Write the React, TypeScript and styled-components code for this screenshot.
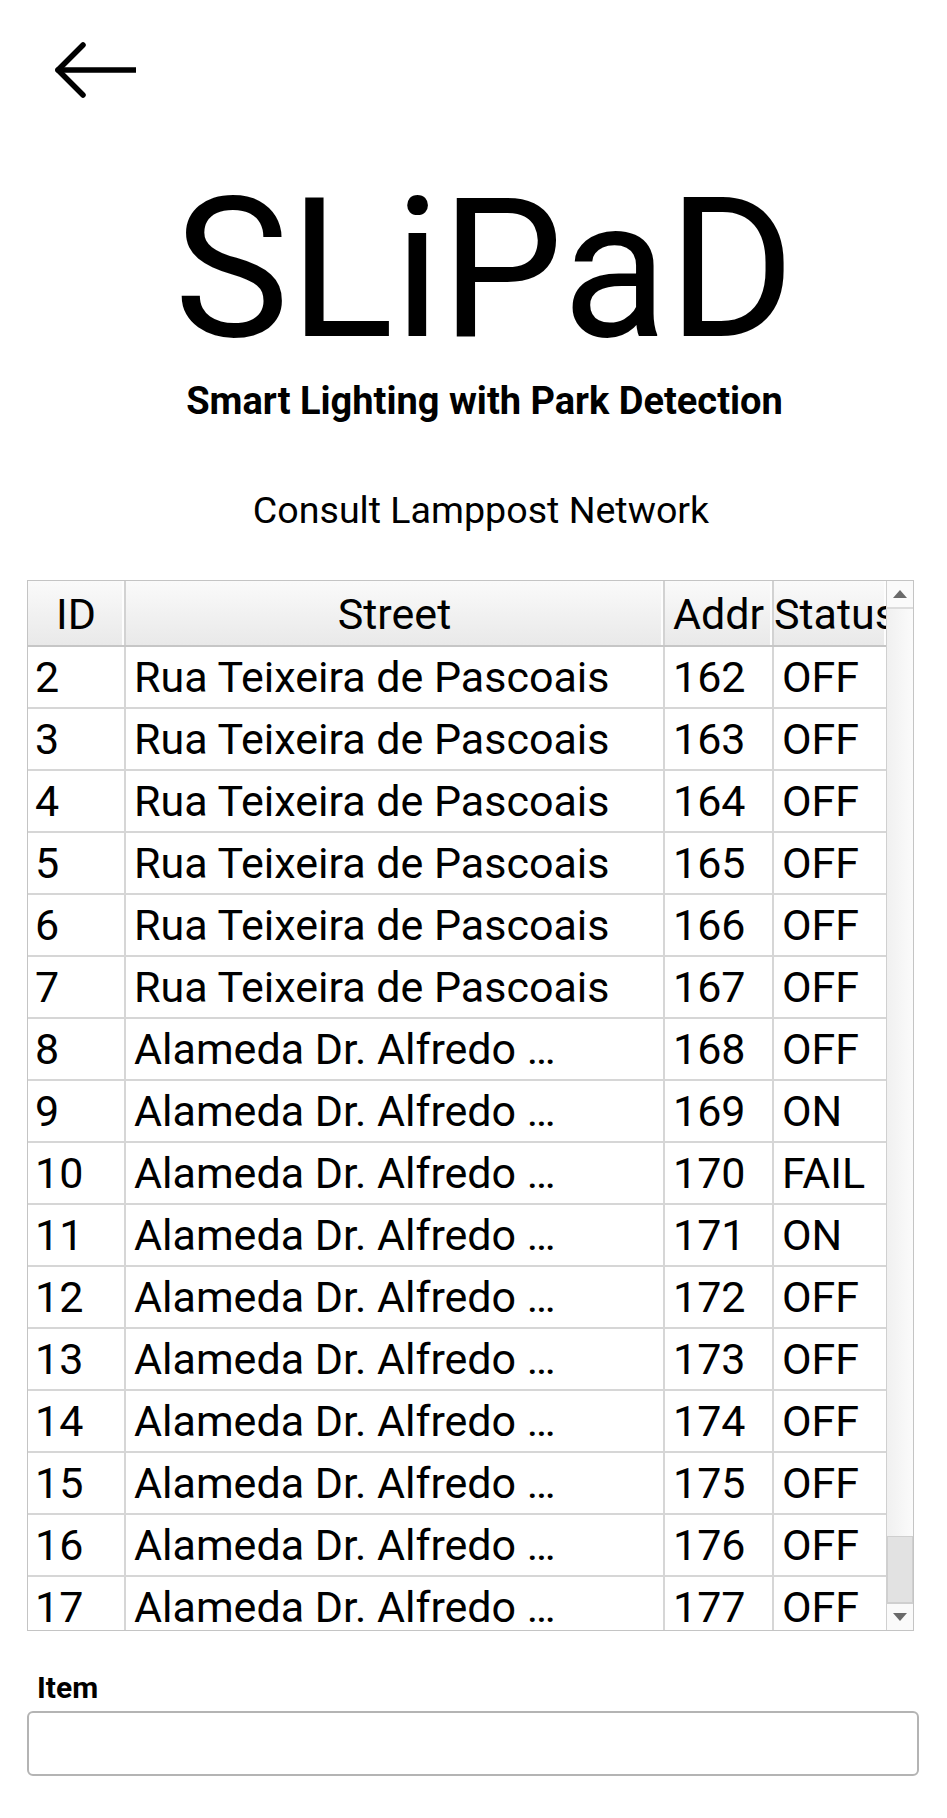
import React from "react";
import styled, { createGlobalStyle } from "styled-components";

const GlobalStyle = createGlobalStyle`
  html, body { margin: 0; padding: 0; background: #ffffff; }
  body { font-family: Roboto, "Noto Sans", "Liberation Sans", sans-serif; color: #000; }
  * { box-sizing: border-box; }
`;

const Page = styled.div`
  width: 947px;
  padding: 40px 0 0 27px;
  display: flex;
  flex-direction: column;
`;

const BackButton = styled.button`
  width: 90px;
  height: 60px;
  margin-left: 22px;
  padding: 0;
  border: none;
  background: transparent;
  display: flex;
  align-items: center;
  justify-content: center;
`;

const Heading = styled.div`
  width: 887px;
  padding-left: 28px;
  display: flex;
  flex-direction: column;
  align-items: center;
`;

const Title = styled.h1`
  margin: 70px 0 0;
  font-size: 194px;
  line-height: 200px;
  font-weight: 400;
`;

const Subtitle = styled.h2`
  margin: 10px 0 0;
  font-size: 38px;
  line-height: 42px;
  font-weight: 700;
`;

const Caption = styled.p`
  margin: 66px 7px 0 0;
  font-size: 37.6px;
  line-height: 44px;
  font-weight: 400;
`;

const TableFrame = styled.div`
  margin-top: 48px;
  width: 887px;
  height: 1051px;
  border: 1px solid #c4c4c4;
  display: flex;
  background: #fff;
`;

const GridArea = styled.div`
  flex: 1;
  display: flex;
  flex-direction: column;
  overflow: hidden;
`;

const columns = "98px 539px 109px 114px";

const HeaderRow = styled.div`
  display: grid;
  grid-template-columns: ${columns};
  height: 66px;
  flex-shrink: 0;
  background: linear-gradient(#fafafa, #e9e9e9);
  border-bottom: 2px solid #c6c6c6;
`;

const HeaderCell = styled.div`
  font-size: 43px;
  line-height: 66px;
  text-align: center;
  white-space: nowrap;
  overflow: hidden;
  border-right: 2px solid #d2d2d2;
  box-shadow: inset -3px 0 0 -1px #fdfdfd;
`;

const Body = styled.div`
  flex: 1;
  overflow: hidden;
`;

const Row = styled.div`
  display: grid;
  grid-template-columns: ${columns};
  height: 62px;
  border-bottom: 2px solid #d6d6d6;
`;

const Cell = styled.div<{ $pad?: number }>`
  font-size: 43px;
  line-height: 60px;
  padding-left: ${(p) => p.$pad ?? 8}px;
  white-space: nowrap;
  overflow: hidden;
  border-right: 2px solid #d6d6d6;
`;

const Scrollbar = styled.div`
  width: 27px;
  flex-shrink: 0;
  display: flex;
  flex-direction: column;
  border-left: 1px solid #d0d0d0;
  background: linear-gradient(90deg, #f0f0f0, #fbfbfb);
`;

const ScrollButton = styled.div`
  height: 26px;
  flex-shrink: 0;
  display: flex;
  align-items: center;
  justify-content: center;
  background: #fafafa;
`;

const Track = styled.div`
  flex: 1;
  display: flex;
  flex-direction: column;
  justify-content: flex-end;
  border-top: 2px solid #dcdcdc;
`;

const Thumb = styled.div`
  height: 68px;
  background: #e2e2e2;
  border: 1px solid #cfcfcf;
  border-bottom-width: 2px;
`;

const Triangle = styled.div<{ $down?: boolean }>`
  width: 0;
  height: 0;
  border-left: 7px solid transparent;
  border-right: 7px solid transparent;
  ${(p) =>
    p.$down ? "border-top: 8px solid #6a6a6a;" : "border-bottom: 8px solid #6a6a6a;"}
`;

const FieldLabel = styled.label`
  margin: 40px 0 0 10px;
  font-size: 30px;
  line-height: 34px;
  font-weight: 700;
`;

const Input = styled.input`
  margin-top: 6px;
  width: 892px;
  height: 65px;
  border: 2px solid #b4b4b4;
  border-radius: 6px;
  background: #fff;
  font-family: inherit;
  font-size: 30px;
  padding: 0 10px;
  outline: none;
`;

type Lamp = { id: number; street: string; addr: number; status: string };

const statuses = ["OFF", "OFF", "OFF", "OFF", "OFF", "OFF", "OFF", "ON", "FAIL", "ON", "OFF", "OFF", "OFF", "OFF", "OFF", "OFF"];

const lamps: Lamp[] = statuses.map((status, i) => ({
  id: i + 2,
  street: i < 6 ? "Rua Teixeira de Pascoais" : "Alameda Dr. Alfredo \u2026",
  addr: 162 + i,
  status,
}));

export default function App() {
  return (
    <>
      <GlobalStyle />
      <Page>
        <BackButton aria-label="Back">
          <svg width="84" height="60" viewBox="0 0 84 60">
            <g stroke="#000" strokeWidth="5.5" strokeLinecap="round" strokeLinejoin="round" fill="none">
              <line x1="6" y1="30" x2="84" y2="30" />
              <polyline points="31,5 6,30 31,55" />
            </g>
          </svg>
        </BackButton>
        <Heading>
          <Title>SLiPaD</Title>
          <Subtitle>Smart Lighting with Park Detection</Subtitle>
          <Caption>Consult Lamppost Network</Caption>
        </Heading>
        <TableFrame>
          <GridArea>
            <HeaderRow>
              <HeaderCell>ID</HeaderCell>
              <HeaderCell>Street</HeaderCell>
              <HeaderCell>Addr</HeaderCell>
              <HeaderCell>Status</HeaderCell>
            </HeaderRow>
            <Body>
              {lamps.map((l) => (
                <Row key={l.id}>
                  <Cell $pad={7}>{l.id}</Cell>
                  <Cell>{l.street}</Cell>
                  <Cell>{l.addr}</Cell>
                  <Cell>{l.status}</Cell>
                </Row>
              ))}
            </Body>
          </GridArea>
          <Scrollbar>
            <ScrollButton>
              <Triangle />
            </ScrollButton>
            <Track>
              <Thumb />
            </Track>
            <ScrollButton>
              <Triangle $down />
            </ScrollButton>
          </Scrollbar>
        </TableFrame>
        <FieldLabel htmlFor="item">Item</FieldLabel>
        <Input id="item" />
      </Page>
    </>
  );
}
